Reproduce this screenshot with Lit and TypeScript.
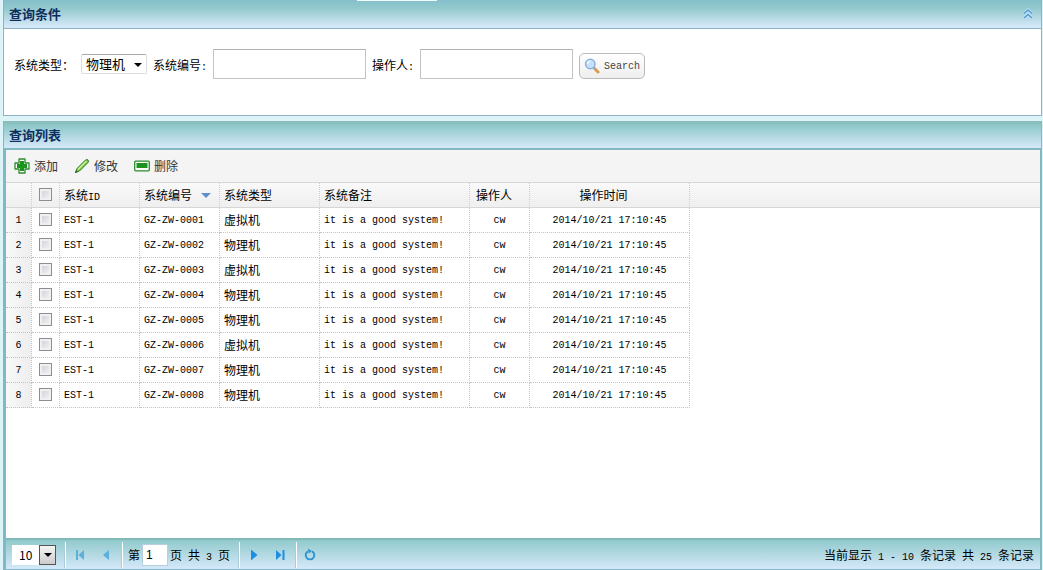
import { LitElement, html, css, svg } from "lit";
import { customElement, state } from "lit/decorators.js";

interface Row {
  code: string;
  type: string;
}

const PHYSICAL = "物理机";
const VIRTUAL = "虚拟机";

const ROWS: Row[] = [VIRTUAL, PHYSICAL, VIRTUAL, PHYSICAL, PHYSICAL, VIRTUAL, PHYSICAL, PHYSICAL].map(
  (type, i) => ({ code: `GZ-ZW-000${i + 1}`, type })
);

const addIcon = svg`<svg width="16" height="16" viewBox="0 0 16 16"><path d="M5 1h6v4h4v6h-4v4H5v-4H1V5h4z" fill="#fff" stroke="#2d8a2d" stroke-width="1.3" stroke-linejoin="round"/><path d="M6 3h4v3h3v4h-3v3H6v-3H3V6h3z" fill="#1c931c"/></svg>`;
const editIcon = svg`<svg width="16" height="16" viewBox="0 0 16 16"><path d="M1.500 14.500L3 10.500 11.500 2Q13 1 14 2T14 4.500L5.500 13z" fill="#7cc843" stroke="#328026"/><path d="M4 11.500L12.500 3" stroke="#d4f4a4" stroke-width="1.300"/><path d="M1 15l1-2.500L3.500 14z" fill="#234f1c"/></svg>`;
const removeIcon = svg`<svg width="16" height="16" viewBox="0 0 16 16"><rect x=".7" y="3.200" width="14.600" height="9.600" rx="1" fill="#fff" stroke="#2d8a2d" stroke-width="1.300"/><rect x="2.500" y="5" width="11" height="5" fill="#1c931c"/></svg>`;
const searchIcon = svg`<svg width="16" height="16" viewBox="0 0 16 16"><path d="M10 10l4 4" stroke="#d89a4c" stroke-width="3" stroke-linecap="round"/><path d="M9.500 9.500l2 2" stroke="#a9a9a9" stroke-width="1.500"/><circle cx="6.300" cy="6" r="4.700" fill="#c4e3fa" stroke="#8bafd8" stroke-width="1.500"/><path d="M3.500 6a3 3 0 0 1 3-3" fill="none" stroke="#fff" stroke-width="1.200"/></svg>`;
const collapseIcon = svg`<svg width="16" height="16" viewBox="0 0 16 16"><path d="M4 7.500l4-3.500 4 3.500M4 12l4-3.500 4 3.500" fill="none" stroke="#c4e5f7" stroke-width="3"/><path d="M4 7.500l4-3.500 4 3.500M4 12l4-3.500 4 3.500" fill="none" stroke="#4f9dd0" stroke-width="1.600"/></svg>`;
const firstIcon = svg`<svg width="16" height="16" viewBox="0 0 16 16"><path d="M4 3h2v10H4zM12 3v10L6.500 8z" fill="#5cb0dc"/></svg>`;
const prevIcon = svg`<svg width="16" height="16" viewBox="0 0 16 16"><path d="M11 3v10L5 8z" fill="#5cb0dc"/></svg>`;
const nextIcon = svg`<svg width="16" height="16" viewBox="0 0 16 16"><path d="M5 2.500v11L11.500 8z" fill="#1c8fe3"/></svg>`;
const lastIcon = svg`<svg width="16" height="16" viewBox="0 0 16 16"><path d="M4 3v10l5.500-5zM10.500 3h2v10h-2z" fill="#1c8fe3"/></svg>`;
const reloadIcon = svg`<svg width="16" height="16" viewBox="0 0 16 16"><path d="M10 4.300A4.300 4.300 0 1 1 6 4.300" fill="none" stroke="#3093ce" stroke-width="1.900"/><path d="M5.800 1.500L10 4 6.800 6.500z" fill="#3093ce"/></svg>`;

@customElement("app-root")
export class AppRoot extends LitElement {
  @state() private collapsed = false;

  static styles = css`
    :host {
      display: flex;
      flex-direction: column;
      gap: 5px;
      min-height: 100vh;
      box-sizing: border-box;
      padding: 0 1px 0 3px;
      background: #dcf3f8;
      color: #000;
      font: 12px/16px "Noto Sans CJK SC", sans-serif;
    }
    * { box-sizing: border-box; }
    svg { display: block; flex: none; }
    button, input, select { font: inherit; color: inherit; margin: 0; }
    button { border: 0; padding: 0; background: none; }
    .mono {
      font-family: "Liberation Mono", "Noto Sans CJK SC", monospace;
      font-size: 10px;
      white-space: pre;
    }
    span.mono { line-height: 0; }
    .panel { border: 1px solid #8fb2c4; border-top: 0; background: #fff; }
    .list {
      display: flex;
      flex-direction: column;
      flex: 1;
      border-bottom-color: #82b9c4;
    }
    .head {
      position: relative;
      display: flex;
      align-items: center;
      justify-content: space-between;
      height: 29px;
      padding: 0 5px;
      border-bottom: 1px solid #8fb2c4;
      background: linear-gradient(#85bfcb, #93c9cc 30%, #d2e7f7 92%);
    }
    .list > .head {
      border-bottom: 2px solid #82b9c0;
      background: linear-gradient(#88b9b9, #91cacc 20%, #d2e7f7 95%);
    }
    h2 { margin: 0; color: #0e2d5f; font: bold 13px/16px "Noto Sans CJK SC", sans-serif; }
    .tab {
      position: absolute;
      top: 0;
      left: 34%;
      width: 80px;
      height: 1px;
      background: #eefcfc;
    }
    .form {
      display: flex;
      align-items: center;
      gap: 6px;
      padding: 20px 10px 36px;
    }
    .form label { padding-top: 2px; white-space: nowrap; }
    .form .first { margin-right: 1px; }
    .form select {
      width: 66px;
      height: 20px;
      padding: 0 0 0 4px;
      border: 1px solid #ddd;
      border-top-color: #aaa;
      border-radius: 2px;
      appearance: none;
      background: #fff;
      font-size: 13px;
      line-height: 16px;
    }
    .pick { position: relative; display: flex; }
    .caret {
      position: absolute;
      right: 5px;
      top: 9px;
      border: 4px solid transparent;
      border-top-color: #000;
      border-bottom: 0;
      pointer-events: none;
    }
    .form input { width: 153px; height: 30px; padding: 0 4px; border: 1px solid #c3c3c3; border-top-color: #b0b0b0; background: #fff; }
    .search {
      display: flex;
      align-items: center;
      align-self: flex-end;
      gap: 4px;
      height: 26px;
      padding: 0 4px;
      border: 1px solid #bbb;
      border-radius: 5px;
      background: linear-gradient(#fff, #eee);
      color: #444;
    }
    .search b { padding-top: 2px; font-weight: normal; }
    .body { display: flex; flex-direction: column; flex: 1; border: 0 solid #7fbac4; border-width: 0 1px 0 2px; }
    .tools {
      display: flex;
      align-items: center;
      gap: 16px;
      height: 33px;
      padding: 0 8px;
      border-bottom: 1px solid #d6d6d6;
      background: #f4f4f4;
    }
    .tools button { display: flex; align-items: center; gap: 4px; color: #333; }
    .grid { flex: 1; }
    .strip {
      background:
        linear-gradient(#d6d6d6, #d6d6d6) no-repeat 0 24px / 100% 1px,
        linear-gradient(#f9f9f9, #efefef) no-repeat 0 0 / 100% 24px;
    }
    table { table-layout: fixed; width: 684px; border-collapse: separate; border-spacing: 0; }
    .c-num { width: 26px; }
    .c-check { width: 28px; }
    .c-80 { width: 80px; }
    .c-100 { width: 100px; }
    .c-150 { width: 150px; }
    .c-60 { width: 60px; }
    .c-160 { width: 160px; }
    th, td {
      height: 25px;
      padding: 0 4px;
      border-right: 1px dotted #c4c4c4;
      border-bottom: 1px dotted #c4c4c4;
      text-align: left;
      font-weight: normal;
      white-space: nowrap;
      overflow: hidden;
    }
    th.mono, td.mono { padding-top: 2px; }
    thead th { border-right-color: #ccc; border-bottom: 1px solid #d6d6d6; }
    tbody th { background: linear-gradient(90deg, #f8f8f8, #eee); }
    th.center, td.center { text-align: center; }
    th.operator { padding-left: 6px; }
    th.time { padding-right: 16px; text-align: center; }
    .box {
      display: block;
      width: 13px;
      height: 13px;
      margin: 0 auto 2px;
      border: 1px solid #8b8f94;
      appearance: none;
      background: linear-gradient(135deg, #cbcfd5, #f6f6f6);
      box-shadow: inset 0 0 0 2px #f0f0f0;
    }
    .sort { display: flex; align-items: center; justify-content: space-between; padding-right: 4px; }
    .down { border: 5px solid transparent; border-top-color: #5f8fca; border-bottom: 0; }
    .pager {
      display: flex;
      align-items: center;
      height: 31px;
      padding: 0 6px;
      border-top: 2px solid #82b9b9;
      background: linear-gradient(#91cacc, #d2e7f7 95%);
    }
    .pager select {
      width: 44px;
      height: 20px;
      padding: 0 0 0 7px;
      border: 0;
      border-radius: 0;
      appearance: none;
      background: #fff;
      font-size: 12px;
      line-height: 16px;
    }
    .drop {
      position: absolute;
      top: 0;
      right: 0;
      width: 17px;
      height: 20px;
      border: 1px solid #555;
      background: linear-gradient(#f4f4f4, #ccc);
      pointer-events: none;
    }
    .drop .caret { right: 3px; top: 7px; }
    .sep { width: 2px; height: 26px; margin: 0 6px 0 8px; background: linear-gradient(90deg, #a9ccd8 50%, #fff 50%); }
    .nav { display: flex; gap: 10px; }
    .nav + .sep { margin: 0 5px 0 7px; }
    .page { display: flex; align-items: center; gap: 2px; }
    .page input {
      width: 26px;
      height: 22px;
      padding: 0 3px;
      border: 1px solid #b8cfe0;
      background: #fff;
      font-family: "Liberation Sans", sans-serif;
    }
    .summary { margin-left: auto; white-space: nowrap; }
  `;

  render() {
    return html`
      <section class="panel">
        <header class="head">
          <span class="tab"></span>
          <h2>查询条件</h2>
          <button aria-label="折叠" @click=${() => (this.collapsed = !this.collapsed)}>${collapseIcon}</button>
        </header>
        <form class="form" ?hidden=${this.collapsed} @submit=${(e: Event) => e.preventDefault()}>
          <label class="first" for="type">系统类型：</label>
          <span class="pick">
            <select id="type"><option>${PHYSICAL}</option><option>${VIRTUAL}</option></select>
            <span class="caret"></span>
          </span>
          <label for="code">系统编号<span class="mono">:</span></label>
          <input id="code" type="text" />
          <label for="operator">操作人<span class="mono">:</span></label>
          <input id="operator" type="text" />
          <button class="search mono">${searchIcon}<b>Search</b></button>
        </form>
      </section>

      <section class="panel list">
        <header class="head"><h2>查询列表</h2></header>
        <div class="body">
          <div class="tools">
            <button>${addIcon}添加</button>
            <button>${editIcon}修改</button>
            <button>${removeIcon}删除</button>
          </div>
          <div class="grid">
            <div class="strip">
              <table>
                <colgroup>
                  <col class="c-num" /><col class="c-check" /><col class="c-80" /><col class="c-80" />
                  <col class="c-100" /><col class="c-150" /><col class="c-60" /><col class="c-160" />
                </colgroup>
                <thead>
                  <tr>
                    <th></th>
                    <th><input class="box" type="checkbox" aria-label="全选" /></th>
                    <th>系统<span class="mono">ID</span></th>
                    <th><div class="sort">系统编号<span class="down"></span></div></th>
                    <th>系统类型</th>
                    <th>系统备注</th>
                    <th class="operator">操作人</th>
                    <th class="time">操作时间</th>
                  </tr>
                </thead>
                <tbody>
                  ${ROWS.map(
                    (r, i) => html`<tr>
                      <th class="center mono">${i + 1}</th>
                      <td><input class="box" type="checkbox" aria-label=${r.code} /></td>
                      <td class="mono">EST-1</td>
                      <td class="mono">${r.code}</td>
                      <td>${r.type}</td>
                      <td class="mono">it is a good system!</td>
                      <td class="center mono">cw</td>
                      <td class="center mono">2014/10/21 17:10:45</td>
                    </tr>`
                  )}
                </tbody>
              </table>
            </div>
          </div>
          <footer class="pager">
            <span class="pick">
              <select aria-label="每页记录数"><option>10</option><option>20</option></select>
              <span class="drop"><span class="caret"></span></span>
            </span>
            <span class="sep"></span>
            <span class="nav">
              <button aria-label="首页">${firstIcon}</button>
              <button aria-label="上一页">${prevIcon}</button>
            </span>
            <span class="sep"></span>
            <span class="page">
              <label for="page">第</label>
              <input id="page" type="text" value="1" />
              <span>页<span class="mono"> </span>共<span class="mono"> 3 </span>页</span>
            </span>
            <span class="sep"></span>
            <span class="nav">
              <button aria-label="下一页">${nextIcon}</button>
              <button aria-label="末页">${lastIcon}</button>
            </span>
            <span class="sep"></span>
            <button aria-label="刷新">${reloadIcon}</button>
            <span class="summary">当前显示<span class="mono"> 1 - 10 </span>条记录<span class="mono"> </span>共<span class="mono"> 25 </span>条记录</span>
          </footer>
        </div>
      </section>
    `;
  }
}
